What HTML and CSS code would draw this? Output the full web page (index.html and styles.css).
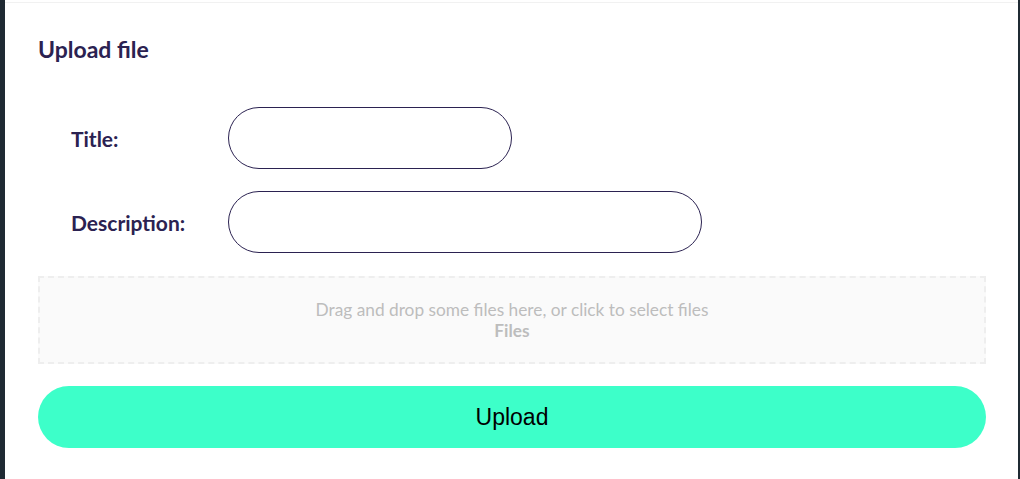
FILE: index.html
```html
<!DOCTYPE html>
<html>
<head>
<meta charset="utf-8">
<link rel="stylesheet" href="styles.css">
</head>
<body>
<div class="frame">
  <div class="edge-left"></div>
  <main class="panel">
    <h1 class="heading">Upload file</h1>
    <form class="form">
      <div class="row">
        <label class="label">Title:</label>
        <input class="field field-title" type="text">
      </div>
      <div class="row">
        <label class="label">Description:</label>
        <input class="field field-desc" type="text">
      </div>
      <div class="dropzone">
        <p class="drop-text">Drag and drop some files here, or click to select files</p>
        <p class="drop-files">Files</p>
      </div>
      <button class="upload" type="button">Upload</button>
    </form>
  </main>
  <div class="edge-right"></div>
</div>
</body>
</html>
```
FILE: styles.css
```css
html, body {
  margin: 0;
  padding: 0;
  background: #ffffff;
}
.frame {
  display: flex;
  width: 1020px;
  height: 479px;
  overflow: hidden;
}
.edge-left {
  width: 5px;
  flex: none;
  background: #1f2a33;
}
.edge-right {
  width: 2px;
  flex: none;
  background: #1f2a33;
}
.panel {
  flex: 1;
  margin-top: 2px;
  border-top: 1px solid #f1f1f1;
  padding: 0 32px 0 33px;
  font-family: Lato, "Noto Sans", sans-serif;
}
.heading {
  margin: 33px 0 0 0;
  font-size: 23px;
  line-height: 26px;
  font-weight: 700;
  color: #2b2251;
}
.form {
  margin-top: 45px;
  display: flex;
  flex-direction: column;
}
.row {
  display: flex;
  align-items: center;
  padding-left: 33px;
  margin-bottom: 22px;
}
.label {
  width: 157px;
  font-size: 21px;
  font-weight: 700;
  color: #2b2251;
}
.field {
  box-sizing: border-box;
  height: 62px;
  border: 1px solid #2b2251;
  border-radius: 31px;
  background: #fff;
  padding: 0 20px;
  font-family: Lato, sans-serif;
  font-size: 16px;
  outline: none;
}
.field-title { width: 284px; }
.field-desc { width: 474px; }
.dropzone {
  box-sizing: border-box;
  height: 88px;
  margin-top: 1px;
  border: 2px dashed #eeeeee;
  background: #fafafa;
  display: flex;
  flex-direction: column;
  align-items: center;
  justify-content: center;
  color: #bdbdbd;
  font-size: 17.3px;
  line-height: 21px;
}
.drop-text, .drop-files {
  margin: 0;
}
.drop-files {
  font-weight: 700;
}
.upload {
  margin-top: 22px;
  height: 62px;
  border: none;
  border-radius: 31px;
  background: #3dffc9;
  color: #000;
  font-family: "Liberation Sans", Arial, sans-serif;
  font-size: 23px;
}
```
